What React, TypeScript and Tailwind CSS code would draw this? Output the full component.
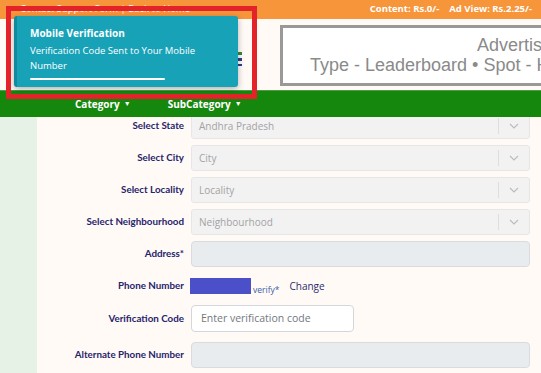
import React from 'react';

const selects = [
  { label: 'Select State', value: 'Andhra Pradesh' },
  { label: 'Select City', value: 'City' },
  { label: 'Select Locality', value: 'Locality' },
  { label: 'Select Neighbourhood', value: 'Neighbourhood' },
];

function Chevron() {
  return (
    <svg width="10" height="6" viewBox="0 0 10 6" fill="none">
      <path d="M1 1l4 4 4-4" stroke="#bdbdbd" strokeWidth="1.2" />
    </svg>
  );
}

function Label({ children }: { children: React.ReactNode }) {
  return (
    <div className="w-[147px] shrink-0 text-right font-['Lato',sans-serif] text-[9.8px] font-bold text-[#27246b] leading-none">
      {children}
    </div>
  );
}

export default function App() {
  return (
    <div className="relative w-[541px] h-[373px] overflow-hidden bg-[#fffaf6] font-['Open_Sans',sans-serif]">
      {/* Top bar */}
      <div className="h-[19px] bg-[#f7953b] flex items-center justify-between pl-[20px] pr-[9px] text-white text-[9.5px]">
        <span>Contact Support Form | Back to Home</span>
        <span className="font-bold">
          Content: Rs.0/-<span className="ml-[10px]">Ad View: Rs.2.25/-</span>
        </span>
      </div>

      {/* Header */}
      <div className="h-[71px] flex bg-[#fffaf6]">
        <div className="w-[280px] shrink-0 flex justify-end items-center pr-[38px]">
          <div className="flex flex-col gap-[3px] pt-[8px]">
            <div className="w-[4px] h-[3px] bg-[#2f8a3a]" />
            <div className="w-[4px] h-[3px] bg-[#2b3f8f]" />
            <div className="w-[4px] h-[2px] bg-[#2b3f8f]" />
          </div>
        </div>
        <div className="mt-[6px] h-[61px] w-[420px] shrink-0 border-[3px] border-[#999999] bg-white font-['Liberation_Sans',sans-serif] text-[#8a8a8a] text-[18px] leading-[20px] whitespace-nowrap pt-[7px]">
          <div className="ml-[194px]">Advertisement Space</div>
          <div className="ml-[27px]">Type - Leaderboard • Spot - Header</div>
        </div>
      </div>

      {/* Nav */}
      <div className="relative z-10 h-[27px] bg-[#16870d] border-t border-[#4f9c45] flex items-center text-white text-[10px] font-bold">
        <span className="ml-[75px] flex items-center gap-[4px]">
          Category <span className="text-[7px]">▼</span>
        </span>
        <span className="ml-[37px] flex items-center gap-[4px]">
          SubCategory <span className="text-[7px]">▼</span>
        </span>
      </div>

      {/* Body */}
      <div className="flex h-full">
        <div className="w-[37px] shrink-0 bg-[#e7f2e6]" />
        <div className="flex-1 -mt-[4px] pr-[11px] flex flex-col gap-[6px]">
          {selects.map((s) => (
            <div key={s.label} className="flex items-center gap-[7px]">
              <Label>{s.label}</Label>
              <div className="flex-1 h-[26px] bg-[#f2f2f2] border border-[#e6e6e6] rounded-[3px] flex items-center pl-[7px] text-[10px] text-[#a3a3a3]">
                <span className="flex-1">{s.value}</span>
                <div className="w-px h-[16px] bg-[#dedede]" />
                <div className="w-[30px] flex justify-center">
                  <Chevron />
                </div>
              </div>
            </div>
          ))}

          <div className="flex items-center gap-[7px]">
            <Label>Address*</Label>
            <div className="flex-1 h-[26px] bg-[#e9ecef] border border-[#d8dcdf] rounded-[4px]" />
          </div>

          <div className="flex items-center gap-[7px] h-[26px]">
            <Label>Phone Number</Label>
            <div className="flex items-end">
              <div className="-ml-[1px] w-[61px] h-[16px] bg-[#4b50c8]" />
              <span className="ml-[2px] -mb-[3px] text-[8.5px] text-[#3b5ca6]">verify*</span>
              <span className="ml-[10px] text-[10px] text-[#2b2a6e] leading-none mb-[3px]">Change</span>
            </div>
          </div>

          <div className="flex items-center gap-[7px]">
            <Label>Verification Code</Label>
            <div className="w-[163px] h-[27px] bg-white border border-[#d3d7db] rounded-[4px] flex items-center pl-[9px] text-[10.5px] text-[#73787e]">
              Enter verification code
            </div>
          </div>

          <div className="flex items-center gap-[7px] mt-[4px]">
            <Label>Alternate Phone Number</Label>
            <div className="flex-1 h-[26px] bg-[#e9ecef] border border-[#d8dcdf] rounded-[4px]" />
          </div>
        </div>
      </div>

      {/* Toast */}
      <div className="absolute left-[14px] top-[16px] w-[224px] h-[71px] bg-[#17a2b8] border-l-[3px] border-[#128a9d] rounded-[3px] shadow-[0_2px_6px_rgba(0,0,0,0.3)] pl-[13px] pt-[10px] text-white z-20">
        <div className="text-[10px] font-bold leading-[14px]">Mobile Verification</div>
        <div className="mt-[3px] w-[180px] text-[9.5px] leading-[15px]">
          Verification Code Sent to Your Mobile Number
        </div>
        <div className="mt-[5px] w-[135px] h-[2px] bg-white rounded-full" />
      </div>

      {/* Red annotation box */}
      <div className="absolute left-[6px] top-[6px] w-[251px] h-[93px] border-[5px] border-[#e3222a] z-30" />
    </div>
  );
}
